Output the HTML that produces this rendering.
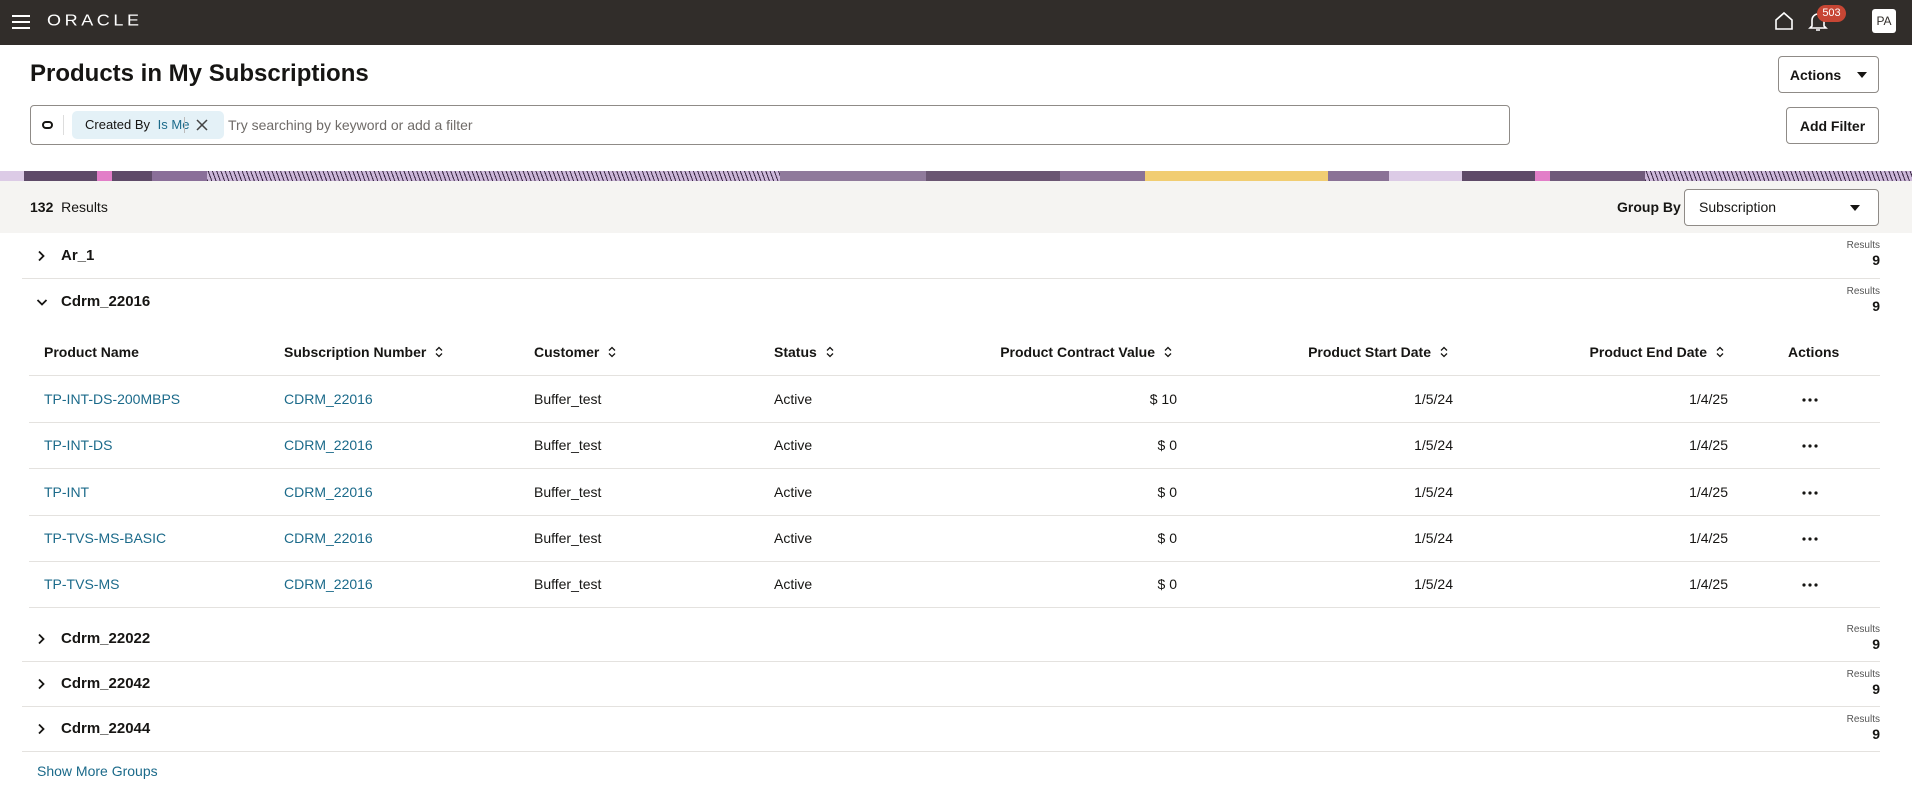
<!DOCTYPE html>
<html><head><meta charset="utf-8">
<style>
*{box-sizing:border-box;margin:0;padding:0}
body{width:1912px;height:802px;overflow:hidden;background:#fff;font-family:"Liberation Sans",sans-serif;color:#161513;position:relative;font-size:14px}
.abs{position:absolute}
.hdr{left:0;top:0;width:1912px;height:45px;background:#312d2a}
.btn{border:1px solid #8f8b87;border-radius:4px;background:#fff;font-weight:bold;font-size:14px;display:flex;align-items:center;justify-content:center}
.banner{left:0;top:171px;width:1912px;height:10px;display:flex}
.banner div{height:10px}
.hatch{background:repeating-linear-gradient(70deg,#3a2a44 0 1px,#cdb8da 1px 4px)}
.bar{left:0;top:181px;width:1912px;height:52px;background:#f5f4f2}
.grp{left:22px;width:1858px;border-bottom:1px solid #e4e2df}
.gname{position:absolute;left:39px;font-weight:bold;font-size:15px}
.chev{position:absolute;left:14px}
.res{position:absolute;right:0;text-align:right;font-size:10px;color:#555;line-height:12px}
.res b{display:block;font-size:14px;color:#161513;line-height:16px}
.th{font-weight:bold;font-size:14px;top:344px}
.row{left:29px;width:1851px;height:1px;background:#e4e2df}
.lk{color:#1b6a8a}
.sort{display:inline-block;margin-left:9px;vertical-align:-1px}
.dots{position:absolute;left:1802px;width:16px;height:4px}
</style></head><body>
<svg width="0" height="0" style="position:absolute"><defs>
<symbol id="s" viewBox="0 0 8 12"><path d="M1 4.5L4 1.5L7 4.5M1 7.5L4 10.5L7 7.5" fill="none" stroke="#161513" stroke-width="1.3"/></symbol>
<symbol id="r" viewBox="0 0 10 12"><path d="M3 1.5L7.5 6L3 10.5" fill="none" stroke="#161513" stroke-width="1.8"/></symbol>
<symbol id="d" viewBox="0 0 12 10"><path d="M1.5 3L6 7.5L10.5 3" fill="none" stroke="#161513" stroke-width="1.8"/></symbol>
<symbol id="o" viewBox="0 0 16 4"><circle cx="2" cy="2" r="1.6" fill="#161513"/><circle cx="8" cy="2" r="1.6" fill="#161513"/><circle cx="14" cy="2" r="1.6" fill="#161513"/></symbol>
</defs></svg>
<div class="abs hdr">
  <svg class="abs" style="left:12px;top:15px" width="18" height="14"><path d="M0 1h18M0 7h18M0 13h18" stroke="#fff" stroke-width="2"/></svg>
  <div class="abs" style="left:47px;top:12px;color:#fff;font-size:18px;letter-spacing:3.6px;transform:scaleY(0.85);transform-origin:left top">ORACLE</div>
  <svg class="abs" style="left:1774px;top:11px" width="20" height="20"><path d="M2 9L10 2L18 9V18H2Z" fill="none" stroke="#fff" stroke-width="1.6"/></svg>
  <svg class="abs" style="left:1808px;top:11px" width="20" height="22"><path d="M4 15V9a6 6 0 0 1 12 0v6l2 2H2z M8 19h4" fill="none" stroke="#fff" stroke-width="1.6"/></svg>
  <div class="abs" style="left:1817px;top:5px;width:29px;height:17px;border-radius:9px;background:#c74634;color:#fff;font-size:11px;text-align:center;line-height:17px">503</div>
  <div class="abs" style="left:1872px;top:9px;width:24px;height:24px;border-radius:3px;background:#fff;color:#312d2a;font-size:12px;text-align:center;line-height:24px">PA</div>
</div>
<div class="abs" style="left:30px;top:60px;font-size:24px;font-weight:bold">Products in My Subscriptions</div>
<div class="abs btn" style="left:1778px;top:56px;width:101px;height:37px">Actions <svg style="margin-left:16px" width="10" height="6"><path d="M0 0h10L5 6z" fill="#161513"/></svg></div>
<div class="abs" style="left:30px;top:105px;width:1480px;height:40px;border:1px solid #8f8b87;border-radius:4px">
  <div class="abs" style="left:11px;top:15px;width:11px;height:8px;border:2px solid #161513;border-radius:4px"></div>
  <div class="abs" style="left:32px;top:9px;width:1px;height:20px;background:#ddd"></div>
  <div class="abs" style="left:41px;top:5px;width:152px;height:28px;background:#e4f1f7;border-radius:5px;font-size:13px;line-height:28px;padding-left:13px">Created By <span class="lk" style="margin-left:4px">Is Me</span><span class="abs" style="left:112px;top:6px;width:1px;height:16px;background:#bbb"></span><svg class="abs" style="left:124px;top:8px" width="12" height="12"><path d="M1 1L11 11M11 1L1 11" stroke="#444" stroke-width="1.5"/></svg></div>
  <div class="abs" style="left:197px;top:11px;font-size:14px;color:#6f6b68">Try searching by keyword or add a filter</div>
</div>
<div class="abs btn" style="left:1786px;top:107px;width:93px;height:37px">Add Filter</div>
<div class="abs banner">
  <div style="width:24px;background:#dccbe6"></div><div style="width:73px;background:#5e4a68"></div><div style="width:15px;background:#e27ec8"></div><div style="width:40px;background:#5e4a68"></div><div style="width:55px;background:#8a6f99"></div><div class="hatch" style="width:573px"></div><div style="width:146px;background:#8f7a9b"></div><div style="width:134px;background:#6a5672"></div><div style="width:85px;background:#8a7296"></div><div style="width:183px;background:#f1cd72"></div><div style="width:61px;background:#8a7296"></div><div style="width:73px;background:#dccbe6"></div><div style="width:73px;background:#5e4a68"></div><div style="width:15px;background:#e27ec8"></div><div style="width:95px;background:#6f5a7a"></div><div class="hatch" style="width:267px"></div>
</div>
<div class="abs bar">
  <div class="abs" style="left:30px;top:18px;font-size:14px"><b>132</b>&nbsp;&nbsp;Results</div>
  <div class="abs" style="left:1617px;top:18px;font-size:14px;font-weight:bold">Group By</div>
  <div class="abs" style="left:1684px;top:8px;width:195px;height:37px;background:#fff;border:1px solid #8f8b87;border-radius:4px;font-size:14px;line-height:35px;padding-left:14px">Subscription<svg class="abs" style="right:18px;top:15px" width="10" height="6"><path d="M0 0h10L5 6z" fill="#161513"/></svg></div>
</div>

<div class="abs grp" style="top:233px;height:46px"><svg class="chev" style="top:17px" width="10" height="12"><use href="#r"/></svg><span class="gname" style="top:14px">Ar_1</span><div class="res" style="top:7px">Results<b>9</b></div></div>
<div class="abs grp" style="top:279px;height:46px;border:none"><svg class="chev" style="top:18px" width="12" height="10"><use href="#d"/></svg><span class="gname" style="top:14px">Cdrm_22016</span><div class="res" style="top:7px">Results<b>9</b></div></div>

<div class="abs th" style="left:44px">Product Name</div>
<div class="abs th" style="left:284px">Subscription Number<svg class="sort" width="8" height="12"><use href="#s"/></svg></div>
<div class="abs th" style="left:534px">Customer<svg class="sort" width="8" height="12"><use href="#s"/></svg></div>
<div class="abs th" style="left:774px">Status<svg class="sort" width="8" height="12"><use href="#s"/></svg></div>
<div class="abs th" style="right:740px">Product Contract Value<svg class="sort" width="8" height="12"><use href="#s"/></svg></div>
<div class="abs th" style="right:464px">Product Start Date<svg class="sort" width="8" height="12"><use href="#s"/></svg></div>
<div class="abs th" style="right:188px">Product End Date<svg class="sort" width="8" height="12"><use href="#s"/></svg></div>
<div class="abs th" style="left:1788px">Actions</div>
<div class="abs row" style="top:375px"></div>

<div class="abs lk" style="left:44px;top:391px">TP-INT-DS-200MBPS</div><div class="abs lk" style="left:284px;top:391px">CDRM_22016</div><div class="abs" style="left:534px;top:391px">Buffer_test</div><div class="abs" style="left:774px;top:391px">Active</div><div class="abs" style="right:735px;top:391px">$ 10</div><div class="abs" style="right:459px;top:391px">1/5/24</div><div class="abs" style="right:184px;top:391px">1/4/25</div><svg class="dots" style="top:398px"><use href="#o"/></svg>
<div class="abs row" style="top:422px"></div>
<div class="abs lk" style="left:44px;top:437px">TP-INT-DS</div><div class="abs lk" style="left:284px;top:437px">CDRM_22016</div><div class="abs" style="left:534px;top:437px">Buffer_test</div><div class="abs" style="left:774px;top:437px">Active</div><div class="abs" style="right:735px;top:437px">$ 0</div><div class="abs" style="right:459px;top:437px">1/5/24</div><div class="abs" style="right:184px;top:437px">1/4/25</div><svg class="dots" style="top:444px"><use href="#o"/></svg>
<div class="abs row" style="top:468px"></div>
<div class="abs lk" style="left:44px;top:484px">TP-INT</div><div class="abs lk" style="left:284px;top:484px">CDRM_22016</div><div class="abs" style="left:534px;top:484px">Buffer_test</div><div class="abs" style="left:774px;top:484px">Active</div><div class="abs" style="right:735px;top:484px">$ 0</div><div class="abs" style="right:459px;top:484px">1/5/24</div><div class="abs" style="right:184px;top:484px">1/4/25</div><svg class="dots" style="top:491px"><use href="#o"/></svg>
<div class="abs row" style="top:515px"></div>
<div class="abs lk" style="left:44px;top:530px">TP-TVS-MS-BASIC</div><div class="abs lk" style="left:284px;top:530px">CDRM_22016</div><div class="abs" style="left:534px;top:530px">Buffer_test</div><div class="abs" style="left:774px;top:530px">Active</div><div class="abs" style="right:735px;top:530px">$ 0</div><div class="abs" style="right:459px;top:530px">1/5/24</div><div class="abs" style="right:184px;top:530px">1/4/25</div><svg class="dots" style="top:537px"><use href="#o"/></svg>
<div class="abs row" style="top:561px"></div>
<div class="abs lk" style="left:44px;top:576px">TP-TVS-MS</div><div class="abs lk" style="left:284px;top:576px">CDRM_22016</div><div class="abs" style="left:534px;top:576px">Buffer_test</div><div class="abs" style="left:774px;top:576px">Active</div><div class="abs" style="right:735px;top:576px">$ 0</div><div class="abs" style="right:459px;top:576px">1/5/24</div><div class="abs" style="right:184px;top:576px">1/4/25</div><svg class="dots" style="top:583px"><use href="#o"/></svg>
<div class="abs row" style="top:607px"></div>

<div class="abs grp" style="top:617px;height:45px"><svg class="chev" style="top:16px" width="10" height="12"><use href="#r"/></svg><span class="gname" style="top:13px">Cdrm_22022</span><div class="res" style="top:7px">Results<b>9</b></div></div>
<div class="abs grp" style="top:662px;height:45px"><svg class="chev" style="top:16px" width="10" height="12"><use href="#r"/></svg><span class="gname" style="top:13px">Cdrm_22042</span><div class="res" style="top:7px">Results<b>9</b></div></div>
<div class="abs grp" style="top:707px;height:45px"><svg class="chev" style="top:16px" width="10" height="12"><use href="#r"/></svg><span class="gname" style="top:13px">Cdrm_22044</span><div class="res" style="top:7px">Results<b>9</b></div></div>
<div class="abs lk" style="left:37px;top:763px;font-size:14px">Show More Groups</div>
</body></html>
